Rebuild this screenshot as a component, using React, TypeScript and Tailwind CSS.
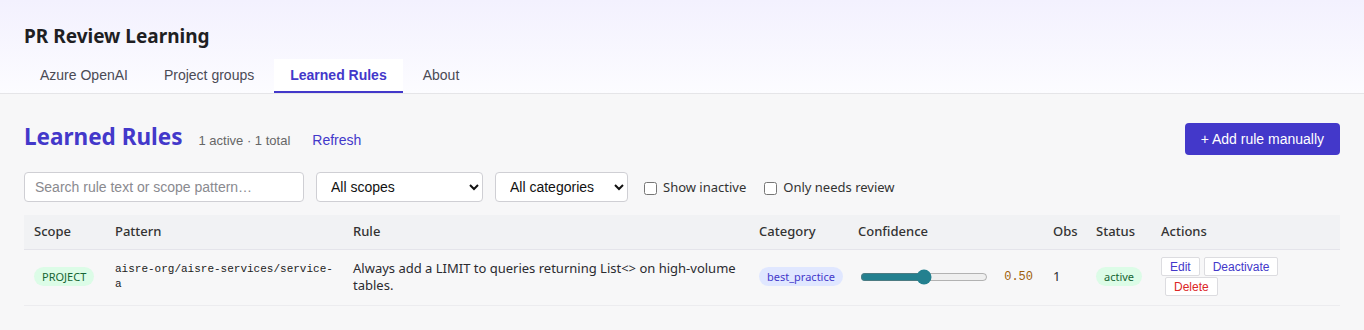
import React from 'react'

const SANS = "font-['Segoe_UI','Noto_Sans',sans-serif]"
const ARIAL = "font-['Liberation_Sans',Arial,sans-serif]"
const MONO = "font-['Liberation_Mono','DejaVu_Sans_Mono',monospace]"

const TABS = ['Azure OpenAI', 'Project groups', 'Learned Rules', 'About']

function Header(): React.JSX.Element {
  return (
    <div className="border-b border-[#e5e5e8] bg-gradient-to-b from-[#f3f1fe] to-[#fcfcff] px-6">
      <h1 className={`${SANS} pt-[23px] text-[19px] font-bold leading-[26px] text-[#1f1f23]`}>PR Review Learning</h1>
      <div className="mt-[10px] flex gap-1">
        {TABS.map((t) => {
          const active = t === 'Learned Rules'
          return (
            <button
              key={t}
              className={`${ARIAL} h-[34px] border-b-2 px-4 text-[14px] ${
                active ? 'border-[#4338ca] bg-white font-bold text-[#4338ca]' : 'border-transparent text-[#4a4a55]'
              }`}
            >
              {t}
            </button>
          )
        })}
      </div>
    </div>
  )
}

function Pill({ className, children }: { className: string; children: React.ReactNode }): React.JSX.Element {
  return (
    <span className={`${SANS} inline-block rounded-full px-[8px] py-[1px] text-[11px] leading-[17px] ${className}`}>
      {children}
    </span>
  )
}

export default function App(): React.JSX.Element {
  return (
    <div className="min-h-[330px] bg-[#f7f7f8]">
      <Header />
      <div className="px-6">
        <div className="mt-[29px] flex items-center justify-between">
          <div className="-mt-[5px] flex items-baseline">
            <h2 className={`${SANS} text-[22.5px] font-bold leading-[32px] text-[#4338ca]`}>Learned Rules</h2>
            <span className={`${ARIAL} ml-[16px] text-[13px] text-[#666]`}>1 active · 1 total</span>
            <button className={`${ARIAL} ml-[22px] text-[14px] text-[#4338ca]`}>Refresh</button>
          </div>
          <button className={`${ARIAL} h-[32px] rounded-[4px] bg-[#4338ca] px-4 text-[14px] font-medium text-white`}>
            + Add rule manually
          </button>
        </div>

        <div className="mt-[17px] flex items-center gap-3">
          <input
            className={`${ARIAL} h-[30px] w-[280px] rounded-[4px] border border-[#cfcfd4] bg-white px-[10px] text-[14px] placeholder:text-[#8a8a8f]`}
            placeholder="Search rule text or scope pattern…"
          />
          <select className={`${ARIAL} h-[30px] w-[167px] rounded-[4px] border border-[#cfcfd4] bg-white px-[10px] text-[14px] text-[#111]`}>
            <option>All scopes</option>
          </select>
          <select className={`${ARIAL} h-[30px] w-[133px] rounded-[4px] border border-[#cfcfd4] bg-white px-[10px] text-[14px] text-[#111]`}>
            <option>All categories</option>
          </select>
          <label className={`${SANS} ml-1 mt-[2px] flex items-center gap-[6px] text-[13px] text-[#333]`}>
            <input type="checkbox" className="m-0 h-[13px] w-[13px]" />
            Show inactive
          </label>
          <label className={`${SANS} ml-[6px] mt-[2px] flex items-center gap-[6px] text-[13px] text-[#333]`}>
            <input type="checkbox" className="m-0 h-[13px] w-[13px]" />
            Only needs review
          </label>
        </div>

        <table className={`${SANS} mt-[13px] w-full table-fixed border-collapse text-[13px] text-[#2b2b30]`}>
          <colgroup>
            <col className="w-[81px]" />
            <col className="w-[238px]" />
            <col className="w-[406px]" />
            <col className="w-[99px]" />
            <col className="w-[195px]" />
            <col className="w-[43px]" />
            <col className="w-[65px]" />
            <col />
          </colgroup>
          <thead>
            <tr className="h-[34px] border-b border-[#e4e4ea] bg-[#f1f2f4] text-left">
              {['Scope', 'Pattern', 'Rule', 'Category', 'Confidence', 'Obs', 'Status', 'Actions'].map((h) => (
                <th key={h} className="px-[10px] font-medium text-[#333]">
                  {h}
                </th>
              ))}
            </tr>
          </thead>
          <tbody>
            <tr className="h-[56px] border-b border-[#ececef] align-middle">
              <td className="px-[10px]">
                <Pill className="bg-[#dcfce7] text-[#166534]">PROJECT</Pill>
              </td>
              <td className={`${MONO} px-[10px] text-[11px] leading-[15px] text-[#222]`}>
                aisre-org/aisre-services/service-a
              </td>
              <td className="px-[10px] leading-[17px]">
                Always add a LIMIT to queries returning List&lt;&gt; on high-volume tables.
              </td>
              <td className="px-[10px]">
                <Pill className="bg-[#e0e7ff] px-[7px] text-[10.5px] text-[#4338ca]">best_practice</Pill>
              </td>
              <td className="px-[10px]">
                <div className="flex items-center">
                  <input
                    type="range"
                    min={0}
                    max={1}
                    step={0.01}
                    defaultValue={0.5}
                    className="m-0 ml-[2px] w-[128px] accent-[#23808f]"
                  />
                  <span className={`${MONO} ml-auto text-[12px] text-[#a0600a]`}>0.50</span>
                </div>
              </td>
              <td className="px-[10px]">1</td>
              <td className="px-[10px]">
                <Pill className="bg-[#dcfce7] text-[#166534]">active</Pill>
              </td>
              <td className="px-[10px]">
                <div className={`${ARIAL} -mt-[2px] flex flex-wrap gap-y-[1px] text-[12px]`}>
                  <button className="h-[19px] rounded-[2px] border border-[#dcdce0] bg-white px-[8px] text-[#4338ca]">Edit</button>
                  <button className="ml-1 h-[19px] rounded-[2px] border border-[#dcdce0] bg-white px-[8px] text-[#4338ca]">Deactivate</button>
                  <button className="ml-1 h-[19px] rounded-[2px] border border-[#dcdce0] bg-white px-[8px] text-[#dc2626]">Delete</button>
                </div>
              </td>
            </tr>
          </tbody>
        </table>
      </div>
    </div>
  )
}
